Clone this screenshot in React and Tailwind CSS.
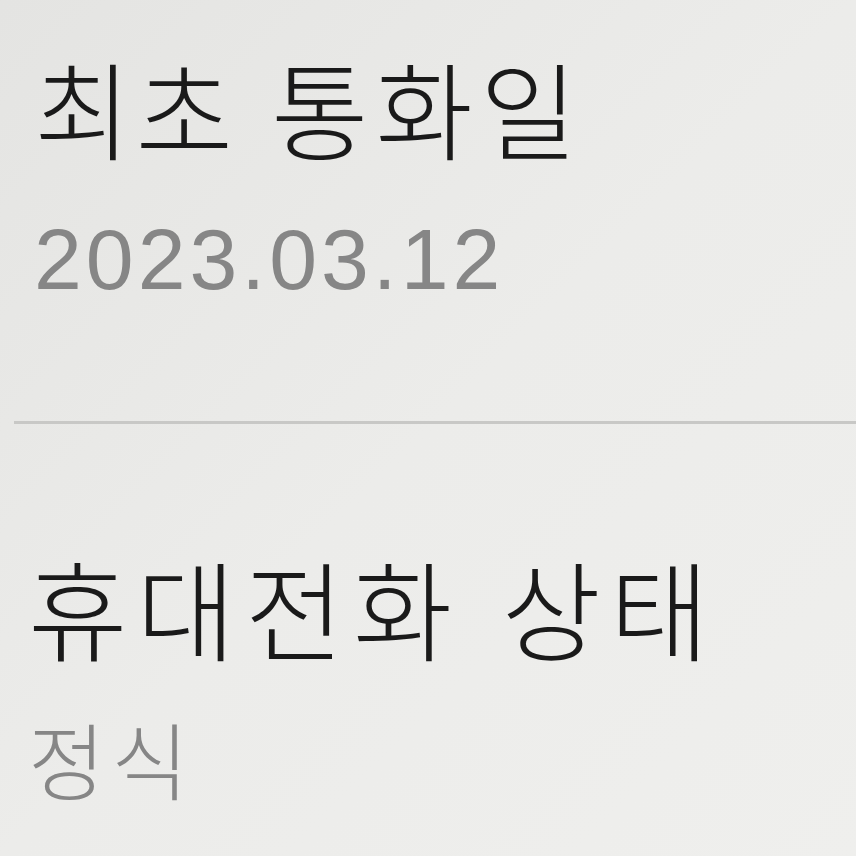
export default function App() {
  const kr = { fontFamily: '"Noto Sans CJK KR", "Noto Sans", sans-serif' };
  return (
    <div className="w-[856px] h-[856px] overflow-hidden bg-gradient-to-br from-[#e4e4e2] via-[#ececea] to-[#efefed]">
      <div className="pl-[34px] pt-[53px]">
        <div className="text-[106px] leading-none text-[#1a1a1a] font-light" style={kr}>
          <span className="tracking-[4px]">최초</span>
          <span className="inline-block w-[34px]" />
          <span className="tracking-[7px]">통화일</span>
        </div>
        <div className="mt-[57px] text-[86px] leading-none text-[#868686] font-['Liberation_Sans',sans-serif] tracking-[4px]">2023.03.12</div>
      </div>
      <div className="mt-[119px] ml-[14px] h-[3px] bg-[#c8c8c6]" />
      <div className="pl-[28px] pt-[128px]">
        <div className="text-[108px] leading-none text-[#1a1a1a] font-light" style={kr}>
          <span className="tracking-[9px]">휴대전화</span>
          <span className="inline-block w-[40px]" />
          <span className="tracking-[9px]">상태</span>
        </div>
        <div className="mt-[56px] text-[84px] leading-none text-[#868686] tracking-[6px] font-light" style={kr}>정식</div>
      </div>
    </div>
  );
}
